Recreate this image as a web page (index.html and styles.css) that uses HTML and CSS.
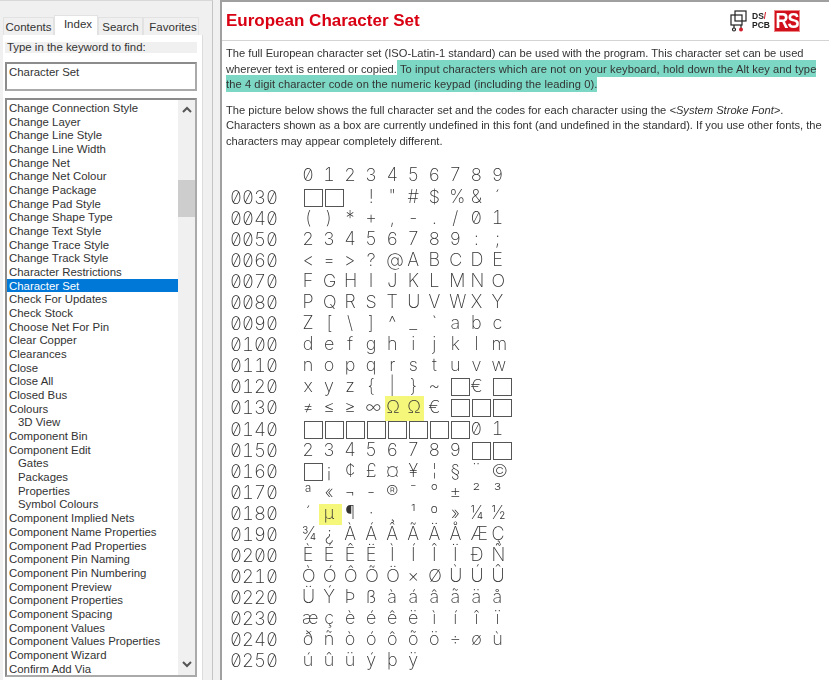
FILE: index.html
```html
<!DOCTYPE html>
<html lang="en">
<head>
<meta charset="utf-8">
<title>European Character Set</title>
<link rel="stylesheet" href="styles.css">
</head>
<body>
<div class="app">
  <aside class="nav">
    <div class="tabs">
      <span class="tab tab-contents">Contents</span>
      <span class="tab tab-index">Index</span>
      <span class="tab tab-search">Search</span>
      <span class="tab tab-favorites">Favorites</span>
    </div>
    <div class="nav-panel">
      <div class="keyword-label">Type in the keyword to find:</div>
      <div class="keyword-input">Character Set</div>
      <div class="index-list">
        <ul class="index-items">
          <li>Change Connection Style</li>
          <li>Change Layer</li>
          <li>Change Line Style</li>
          <li>Change Line Width</li>
          <li>Change Net</li>
          <li>Change Net Colour</li>
          <li>Change Package</li>
          <li>Change Pad Style</li>
          <li>Change Shape Type</li>
          <li>Change Text Style</li>
          <li>Change Trace Style</li>
          <li>Change Track Style</li>
          <li>Character Restrictions</li>
          <li class="selected">Character Set</li>
          <li>Check For Updates</li>
          <li>Check Stock</li>
          <li>Choose Net For Pin</li>
          <li>Clear Copper</li>
          <li>Clearances</li>
          <li>Close</li>
          <li>Close All</li>
          <li>Closed Bus</li>
          <li>Colours</li>
          <li class="sub">3D View</li>
          <li>Component Bin</li>
          <li>Component Edit</li>
          <li class="sub">Gates</li>
          <li class="sub">Packages</li>
          <li class="sub">Properties</li>
          <li class="sub">Symbol Colours</li>
          <li>Component Implied Nets</li>
          <li>Component Name Properties</li>
          <li>Component Pad Properties</li>
          <li>Component Pin Naming</li>
          <li>Component Pin Numbering</li>
          <li>Component Preview</li>
          <li>Component Properties</li>
          <li>Component Spacing</li>
          <li>Component Values</li>
          <li>Component Values Properties</li>
          <li>Component Wizard</li>
          <li>Confirm Add Via</li>
        </ul>
        <div class="scrollbar">
          <svg class="chevron" width="16" height="16" viewBox="0 0 16 16"><path d="M4 10 8 6l4 4" fill="none" stroke="#555" stroke-width="2"/></svg>
          <div class="scroll-track"><div class="scroll-thumb"></div></div>
          <svg class="chevron" width="16" height="16" viewBox="0 0 16 16"><path d="M4 6l4 4 4-4" fill="none" stroke="#555" stroke-width="2"/></svg>
        </div>
      </div>
    </div>
  </aside>
  <div class="splitter"></div>
  <main class="page">
    <header class="page-head">
      <h1>European Character Set</h1>
      <div class="logos">
        <svg width="18" height="22" viewBox="0 0 18 22">
          <g fill="none" stroke="#222" stroke-width="1.2">
            <rect x="1" y="5" width="11" height="10"/>
            <rect x="5" y="1" width="11" height="10"/>
            <path d="M4 15v3M11 15v3"/>
            <circle cx="4" cy="19.5" r="1.5"/>
          </g>
          <circle cx="11" cy="19.5" r="2" fill="#d2202c"/>
        </svg>
        <div class="ds-pcb"><span>DS<i>/</i></span><span>PCB</span></div>
        <div class="rs-logo"><span>RS</span></div>
      </div>
    </header>
    <div class="copy">
      <p>The full European character set (ISO-Latin-1 standard) can be used with the program. This character set can be used wherever text is entered or copied.<mark> To input characters which are not on your keyboard, hold down the Alt key and type the 4 digit character code on the numeric keypad (including the leading 0).</mark></p>
      <p>The picture below shows the full character set and the codes for each character using the <em>&lt;System Stroke Font&gt;</em>. Characters shown as a box are currently undefined in this font (and undefined in the standard). If you use other fonts, the characters may appear completely different.</p>
    </div>
    <div class="charset">
      <b></b><span>0</span><span>1</span><span>2</span><span>3</span><span>4</span><span>5</span><span>6</span><span>7</span><span>8</span><span>9</span>
      <b>0030</b><span class="box"></span><span class="box"></span><span></span><span>!</span><span>"</span><span>#</span><span>$</span><span>%</span><span>&amp;</span><span>´</span>
      <b>0040</b><span>(</span><span>)</span><span>*</span><span>+</span><span>,</span><span>-</span><span>.</span><span>/</span><span>0</span><span>1</span>
      <b>0050</b><span>2</span><span>3</span><span>4</span><span>5</span><span>6</span><span>7</span><span>8</span><span>9</span><span>:</span><span>;</span>
      <b>0060</b><span>&lt;</span><span>=</span><span>&gt;</span><span>?</span><span>@</span><span>A</span><span>B</span><span>C</span><span>D</span><span>E</span>
      <b>0070</b><span>F</span><span>G</span><span>H</span><span>I</span><span>J</span><span>K</span><span>L</span><span>M</span><span>N</span><span>O</span>
      <b>0080</b><span>P</span><span>Q</span><span>R</span><span>S</span><span>T</span><span>U</span><span>V</span><span>W</span><span>X</span><span>Y</span>
      <b>0090</b><span>Z</span><span>[</span><span>\</span><span>]</span><span>^</span><span>_</span><span>`</span><span>a</span><span>b</span><span>c</span>
      <b>0100</b><span>d</span><span>e</span><span>f</span><span>g</span><span>h</span><span>i</span><span>j</span><span>k</span><span>l</span><span>m</span>
      <b>0110</b><span>n</span><span>o</span><span>p</span><span>q</span><span>r</span><span>s</span><span>t</span><span>u</span><span>v</span><span>w</span>
      <b>0120</b><span>x</span><span>y</span><span>z</span><span>{</span><span>|</span><span>}</span><span>~</span><span class="box"></span><span>€</span><span class="box"></span>
      <b>0130</b><span>≠</span><span>≤</span><span>≥</span><span>∞</span><span class="hl hl-first">Ω</span><span class="hl hl-second">Ω</span><span>€</span><span class="box"></span><span class="box"></span><span class="box"></span>
      <b>0140</b><span class="box"></span><span class="box"></span><span class="box"></span><span class="box"></span><span class="box"></span><span class="box"></span><span class="box"></span><span class="box"></span><span>0</span><span>1</span>
      <b>0150</b><span>2</span><span>3</span><span>4</span><span>5</span><span>6</span><span>7</span><span>8</span><span>9</span><span class="box"></span><span class="box"></span>
      <b>0160</b><span class="box"></span><span>¡</span><span>¢</span><span>£</span><span>¤</span><span>¥</span><span>¦</span><span>§</span><span>¨</span><span>©</span>
      <b>0170</b><span>ª</span><span>«</span><span>¬</span><span>-</span><span>®</span><span>¯</span><span>°</span><span>±</span><span>²</span><span>³</span>
      <b>0180</b><span>´</span><span class="hl hl-single">µ</span><span>¶</span><span>·</span><span>¸</span><span>¹</span><span>º</span><span>»</span><span>¼</span><span>½</span>
      <b>0190</b><span>¾</span><span>¿</span><span>À</span><span>Á</span><span>Â</span><span>Ã</span><span>Ä</span><span>Å</span><span>Æ</span><span>Ç</span>
      <b>0200</b><span>È</span><span>É</span><span>Ê</span><span>Ë</span><span>Ì</span><span>Í</span><span>Î</span><span>Ï</span><span>Ð</span><span>Ñ</span>
      <b>0210</b><span>Ò</span><span>Ó</span><span>Ô</span><span>Õ</span><span>Ö</span><span>×</span><span>Ø</span><span>Ù</span><span>Ú</span><span>Û</span>
      <b>0220</b><span>Ü</span><span>Ý</span><span>Þ</span><span>ß</span><span>à</span><span>á</span><span>â</span><span>ã</span><span>ä</span><span>å</span>
      <b>0230</b><span>æ</span><span>ç</span><span>è</span><span>é</span><span>ê</span><span>ë</span><span>ì</span><span>í</span><span>î</span><span>ï</span>
      <b>0240</b><span>ð</span><span>ñ</span><span>ò</span><span>ó</span><span>ô</span><span>õ</span><span>ö</span><span>÷</span><span>ø</span><span>ù</span>
      <b>0250</b><span>ú</span><span>û</span><span>ü</span><span>ý</span><span>þ</span><span>ÿ</span><span></span><span></span><span></span><span></span>
    </div>
  </main>
</div>
</body>
</html>
```

FILE: styles.css
```css
* { box-sizing: border-box; }
html, body { margin: 0; height: 100%; overflow: hidden; background: #fff; }
body { font-family: "Liberation Sans", Arial, sans-serif; color: #222; }

.app { display: flex; width: 829px; height: 680px; filter: blur(0.35px); }

/* Navigation pane */
.nav { width: 213px; flex: none; background: #f0f0f0; border-top: 1px solid #d8d8d8; border-right: 1px solid #c4c4c4; padding: 14px 9px 0 3px; display: flex; flex-direction: column; }
.tabs { display: flex; align-items: flex-end; height: 20px; font-size: 11.5px; color: #333; }
.tab { display: block; height: 18px; line-height: 19px; text-align: center; background: #f0f0f0; border: 1px solid #e2e2e2; border-bottom: 0; }
.tab-contents { width: 51px; }
.tab-index { width: 44px; height: 20px; line-height: 17px; padding-left: 4px; background: #fff; }
.tab-search { width: 45px; }
.tab-favorites { width: 56px; padding-left: 4px; }

.nav-panel { flex: 1; background: #fff; padding: 7px 5px 5px 2px; display: flex; flex-direction: column; border-right: 1px solid #dcdcdc; }
.keyword-label { height: 11px; line-height: 11px; font-size: 11.4px; padding-left: 2px; background: #f0f0f0; color: #333; }
.keyword-input { margin-top: 9px; height: 29px; border: 2px solid #8c8c8c; border-right-color: #aaa; border-bottom-color: #aaa; font-size: 11.4px; line-height: 16px; padding: 0 2px; color: #333; }
.index-list { margin-top: 7px; flex: 1; min-height: 0; border: 2px solid #8c8c8c; border-right-color: #aaa; border-bottom-color: #aaa; display: flex; overflow: hidden; }
.index-items { flex: 1; min-width: 0; list-style: none; margin: 0; padding: 1px 0 0; font-size: 11.4px; line-height: 15px; color: #333; overflow: hidden; }
.index-items li { padding-left: 2px; white-space: nowrap; height: 13.68px; }
.index-items li.sub { padding-left: 11px; }
.index-items li.selected { background: #0078d7; color: #fff; }

.scrollbar { width: 17px; flex: none; background: #f0f0f0; display: flex; flex-direction: column; padding: 2px 0 3px; }
.chevron { display: block; flex: none; margin: 0 auto; }
.scroll-track { flex: 1; padding-top: 62px; }
.scroll-thumb { height: 37px; background: #cdcdcd; }

.splitter { width: 7px; flex: none; background: #f0f0f0; }

/* Topic page */
.page { flex: 1; min-width: 0; border-left: 2px solid #a0a0a0; border-top: 2px solid #a0a0a0; padding-left: 4px; }
.page-head { height: 39px; margin-left: -4px; padding: 0 29px 0 4px; display: flex; align-items: center; justify-content: space-between; border-bottom: 1px solid #d4d4d4; }
h1 { margin: 0; font-size: 17px; line-height: 22px; font-weight: 700; color: #d80012; }
.logos { display: flex; align-items: center; gap: 4px; }
.ds-pcb { display: flex; flex-direction: column; font-size: 8.5px; line-height: 9px; font-weight: 700; color: #222; }
.ds-pcb i { color: #d2202c; font-style: normal; }
.rs-logo { width: 26px; height: 22px; background: #d2101c; border: 1px solid #e88; color: #fff; font-size: 18px; line-height: 20px; font-weight: 700; text-align: center; letter-spacing: -1px; }
.rs-logo span { display: inline-block; transform: scaleY(1.2); }

.copy { font-size: 11.15px; line-height: 15.5px; color: #333; padding-top: 5px; }
.copy p { margin: 0 0 10px; }
.copy mark { background: #7cd8c4; color: #333; padding: 3px 0 2px; letter-spacing: 0.08px; }

.charset { display: grid; grid-template-columns: 72px repeat(10, 21.05px); grid-template-rows: 22px; grid-auto-rows: 21.05px; margin: 15px 0 0 4px; font-family: Inter, "DejaVu Sans", sans-serif; font-feature-settings: "zero", "tnum"; font-weight: 200; font-size: 18px; line-height: 21px; color: #333; }
.charset span { padding-right: 9px; text-align: center; white-space: nowrap; }
.charset b { font-weight: 200; font-size: 18.6px; padding-top: 1px; color: #333; }
.charset .box { padding: 0; }
.box::before { content: ""; display: block; width: 17px; height: 16px; margin: 3px 0 0 2px; border: 1px solid #555; }
.hl { background: #f5f77a; }
.charset .hl-first { margin: 0 0 -3px -1px; padding: 0 9px 0 1px; }
.charset .hl-second { margin: 0 4px -3px 0; padding: 0 5px 0 0; }
.charset .hl-single { margin: 2px 2px -2px -4px; padding: 1px 7px 0 4px; line-height: 15px; }
```
